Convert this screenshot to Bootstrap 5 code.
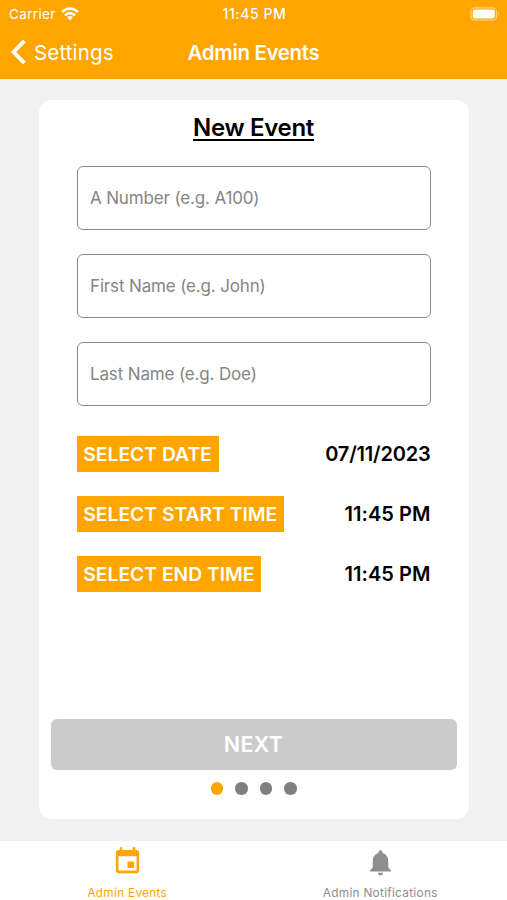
<!DOCTYPE html>
<html lang="en">
<head>
<meta charset="utf-8">
<meta name="viewport" content="width=device-width, initial-scale=1">
<title>Admin Events</title>
<link href="https://cdn.jsdelivr.net/npm/bootstrap@5.3.0/dist/css/bootstrap.min.css" rel="stylesheet">
<style>
  :root { --brand: #ffa500; }
  body { font-family: Inter, "Liberation Sans", sans-serif; background: #f1f1f1; color: #000; line-height: 1.2; }
  svg { display: block; flex: none; }
  .screen { height: 900px; overflow: hidden; }
  .app-header { background: var(--brand); height: 79px; }
  .status-bar { height: 27px; font-size: 13.5px; padding: 1px 7px 0 9px; }
  .status-bar > *, .title-bar > * { flex: 1 1 0; }
  .carrier { letter-spacing: .35px; gap: 5px; }
  .clock { font-weight: 500; font-size: 14px; letter-spacing: .6px; }
  .title-bar { height: 52px; padding: 0 10px; }
  .back-link { font-size: 20.5px; letter-spacing: .15px; gap: 7px; }
  .screen-title { font-size: 20.5px; font-weight: 600; letter-spacing: -.35px; margin: 0; white-space: nowrap; }
  .event-card { width: 430px; height: 719px; margin-top: 21px; border: 0; border-radius: 13px; padding: 13px 12px 24.5px; }
  .form-title { font-size: 24px; font-weight: 600; line-height: 29px; letter-spacing: -.3px; text-decoration: underline; text-decoration-thickness: 2px; text-underline-offset: 3px; text-decoration-skip-ink: none; margin: 0 0 24px; }
  .fields { padding: 0 26px; gap: 24px; }
  .fields .form-control { height: 64px; border: 1px solid #8c8c8c; border-radius: 6px; padding: 0 12.5px; font-size: 17px; letter-spacing: -.15px; color: #000; }
  .fields .form-control::placeholder { color: #858585; opacity: 1; }
  .pickers { padding: 0 26px; margin-top: 30px; gap: 24.2px; }
  .picked { font-size: 20px; font-weight: 600; letter-spacing: .05px; }
  .picked-date { letter-spacing: -.2px; }
  .pick-btn { background: var(--brand); color: #fff; height: 36px; border: 0; border-radius: 0; padding: 0 6.8px; font-size: 19.3px; font-weight: 600; line-height: 36px; }
  .next-btn, .next-btn:disabled { height: 51px; background: #cbcbcb; border: 0; border-radius: 6px; color: #fff; opacity: 1; font-size: 21.5px; font-weight: 600; letter-spacing: .3px; }
  .dots { gap: 12px; margin-top: 12px; }
  .dot { width: 12.5px; height: 12.5px; border-radius: 50%; background: #808080; }
  .dot.current { background: var(--brand); }
  .tab-bar { height: 59px; background: #fff; font-size: 11.8px; letter-spacing: .3px; }
  .tab-link { color: #8e8e8e; padding-top: 5px; gap: 9px; }
  .tab-link.current { color: var(--brand); padding-left: 1px; }
</style>
</head>
<body>
<div class="screen d-flex flex-column">
  <header class="app-header text-white">
    <div class="status-bar d-flex align-items-center">
      <div class="carrier d-flex align-items-center"><span>Carrier</span>
        <svg width="18" height="14" viewBox="0 0 18 14" fill="none" stroke="#fff" stroke-width="2.6"><path d="M1 5Q9-2 17 5M4 8.3Q9 3.8 14 8.3"/><path d="M6 10.3Q9 7.8 12 10.3L9 13.4Z" fill="#fff" stroke="none"/></svg>
      </div>
      <div class="clock text-center">11:45 PM</div>
      <div class="d-flex justify-content-end">
        <svg width="30" height="14" viewBox="0 0 30 14"><rect x="1" y=".8" width="25.5" height="12.4" rx="3.8" fill="none" stroke="#ffd180" stroke-width="1.2"/><rect x="2.8" y="2.5" width="22" height="9" rx="2" fill="#fff"/><path d="M28 5q2 2 0 4z" fill="#ffd180"/></svg>
      </div>
    </div>
    <div class="title-bar d-flex align-items-center">
      <a href="#" class="back-link d-flex align-items-center text-white text-decoration-none">
        <svg width="17" height="26" viewBox="0 1 17 26" fill="none" stroke="#fff" stroke-width="3.8"><path d="M14.5 1.8 3.5 13 14.5 24.2"/></svg>
        <span>Settings</span>
      </a>
      <h1 class="screen-title text-center">Admin Events</h1>
      <span></span>
    </div>
  </header>

  <main class="flex-grow-1">
    <form class="event-card card mx-auto">
      <h2 class="form-title text-center">New Event</h2>
      <div class="fields d-flex flex-column">
        <input class="form-control" placeholder="A Number (e.g. A100)">
        <input class="form-control" placeholder="First Name (e.g. John)">
        <input class="form-control" placeholder="Last Name (e.g. Doe)">
      </div>
      <div class="pickers d-flex flex-column">
        <div class="d-flex justify-content-between align-items-center"><button type="button" class="pick-btn">SELECT DATE</button><span class="picked picked-date">07/11/2023</span></div>
        <div class="d-flex justify-content-between align-items-center"><button type="button" class="pick-btn">SELECT START TIME</button><span class="picked">11:45 PM</span></div>
        <div class="d-flex justify-content-between align-items-center"><button type="button" class="pick-btn">SELECT END TIME</button><span class="picked">11:45 PM</span></div>
      </div>
      <button type="button" class="next-btn btn w-100 mt-auto" disabled>NEXT</button>
      <div class="dots d-flex justify-content-center"><span class="dot current"></span><span class="dot"></span><span class="dot"></span><span class="dot"></span></div>
    </form>
  </main>

  <nav class="tab-bar d-flex">
    <a href="#" class="tab-link current w-50 d-flex flex-column align-items-center text-decoration-none">
      <svg width="31" height="31" viewBox="0 0 24 24" fill="currentColor"><path d="M17 12h-5v5h5v-5zM16 1v2H8V1H6v2H5c-1.11 0-1.99.9-1.99 2L3 19c0 1.1.89 2 2 2h14c1.1 0 2-.9 2-2V5c0-1.1-.9-2-2-2h-1V1h-2zm3 18H5V8h14v11z"/></svg>
      <span>Admin Events</span>
    </a>
    <a href="#" class="tab-link w-50 d-flex flex-column align-items-center text-decoration-none">
      <svg width="31" height="31" viewBox="0 -.7 24 24" fill="currentColor"><path d="M12 22c1.1 0 2-.9 2-2h-4c0 1.1.89 2 2 2zm6-6v-5c0-3.07-1.64-5.64-4.5-6.32V4c0-.83-.67-1.5-1.5-1.5s-1.5.67-1.5 1.5v.68C7.63 5.36 6 7.92 6 11v5l-2 2v1h16v-1l-2-2z"/></svg>
      <span>Admin Notifications</span>
    </a>
  </nav>
</div>
<script src="https://cdn.jsdelivr.net/npm/bootstrap@5.3.0/dist/js/bootstrap.bundle.min.js"></script>
</body>
</html>
